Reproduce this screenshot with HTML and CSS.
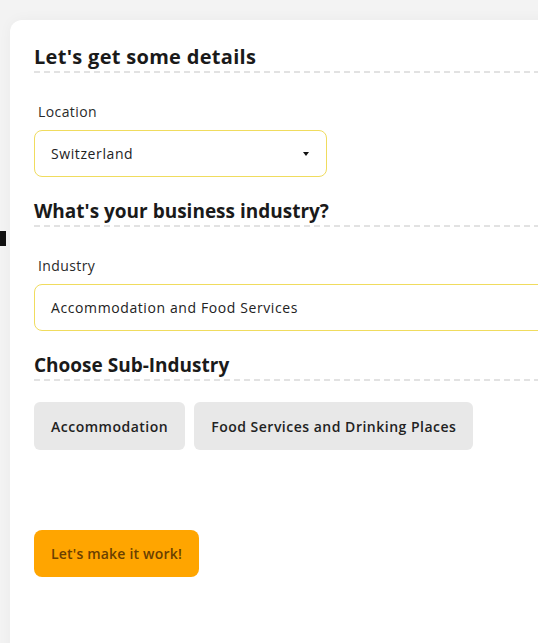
FILE: index.html
```html
<!DOCTYPE html>
<html lang="en">
<head>
<meta charset="utf-8">
<title>Details</title>
<link rel="stylesheet" href="styles.css">
</head>
<body>
<div class="behind"></div>
<div class="page">
  <div class="card">
    <h2 class="section-title first">Let's get some details</h2>
    <div class="field">
      <label class="field-label">Location</label>
      <div class="select">
        <span>Switzerland</span>
        <span class="caret"></span>
      </div>
    </div>
    <h2 class="section-title">What's your business industry?</h2>
    <div class="field">
      <label class="field-label">Industry</label>
      <div class="input wide">Accommodation and Food Services</div>
    </div>
    <h2 class="section-title">Choose Sub-Industry</h2>
    <div class="chips">
      <button class="chip">Accommodation</button>
      <button class="chip">Food Services and Drinking Places</button>
    </div>
    <button class="cta">Let's make it work!</button>
  </div>
</div>
</body>
</html>
```
FILE: styles.css
```css
html, body {
  margin: 0;
  padding: 0;
  overflow: hidden;
}
body {
  background: #f3f3f3;
  font-family: "Open Sans", "Liberation Sans", sans-serif;
  color: #1c1c1c;
  height: 643px;
  position: relative;
}
.behind {
  position: absolute;
  left: 0;
  top: 231px;
  width: 6px;
  height: 15px;
  background: #111;
}
.page {
  padding: 20px 0 0 10px;
  position: relative;
}
.card {
  background: #fff;
  width: 560px;
  min-height: 640px;
  border-radius: 12px 0 0 0;
  box-shadow: 0 0 14px rgba(0,0,0,0.04);
  padding: 23px 0 0 24px;
  box-sizing: border-box;
}
.section-title {
  margin: 0;
  font-size: 19px;
  line-height: 28px;
  font-weight: 700;
  color: #1a1a1a;
  border-bottom: 2px dashed #e2e2e2;
}
.section-title.first {
  font-size: 20px;
  letter-spacing: 0.3px;
}
.field {
  padding-top: 29px;
  display: flex;
  flex-direction: column;
  gap: 8px;
}
.field-label {
  font-size: 14px;
  line-height: 20px;
  padding-left: 4px;
  color: #2a2a2a;
  letter-spacing: 0.4px;
}
.select, .input {
  height: 47px;
  box-sizing: border-box;
  border: 1px solid #f0dc5e;
  border-radius: 8px;
  display: flex;
  align-items: center;
  padding: 0 16px;
  font-size: 14px;
  color: #222;
  letter-spacing: 0.6px;
}
.select {
  width: 293px;
  justify-content: space-between;
}
.caret {
  width: 0;
  height: 0;
  border-left: 3.5px solid transparent;
  border-right: 3.5px solid transparent;
  border-top: 4px solid #111;
  margin-right: 1px;
}
.input.wide {
  width: 540px;
}
.field + .section-title {
  margin-top: 20px;
}
.chips {
  display: flex;
  gap: 9px;
  padding-top: 21px;
}
.chip {
  font-family: inherit;
  height: 48px;
  border: none;
  border-radius: 6px;
  background: #e8e8e8;
  font-size: 14px;
  font-weight: 600;
  color: #222;
  padding: 0 17px;
  letter-spacing: 0.5px;
}
.cta {
  display: block;
  margin-top: 80px;
  font-family: inherit;
  height: 47px;
  width: 165px;
  border: none;
  border-radius: 8px;
  background: #ffa500;
  color: #6a4000;
  font-size: 14px;
  font-weight: 600;
  letter-spacing: 0.2px;
}
```
